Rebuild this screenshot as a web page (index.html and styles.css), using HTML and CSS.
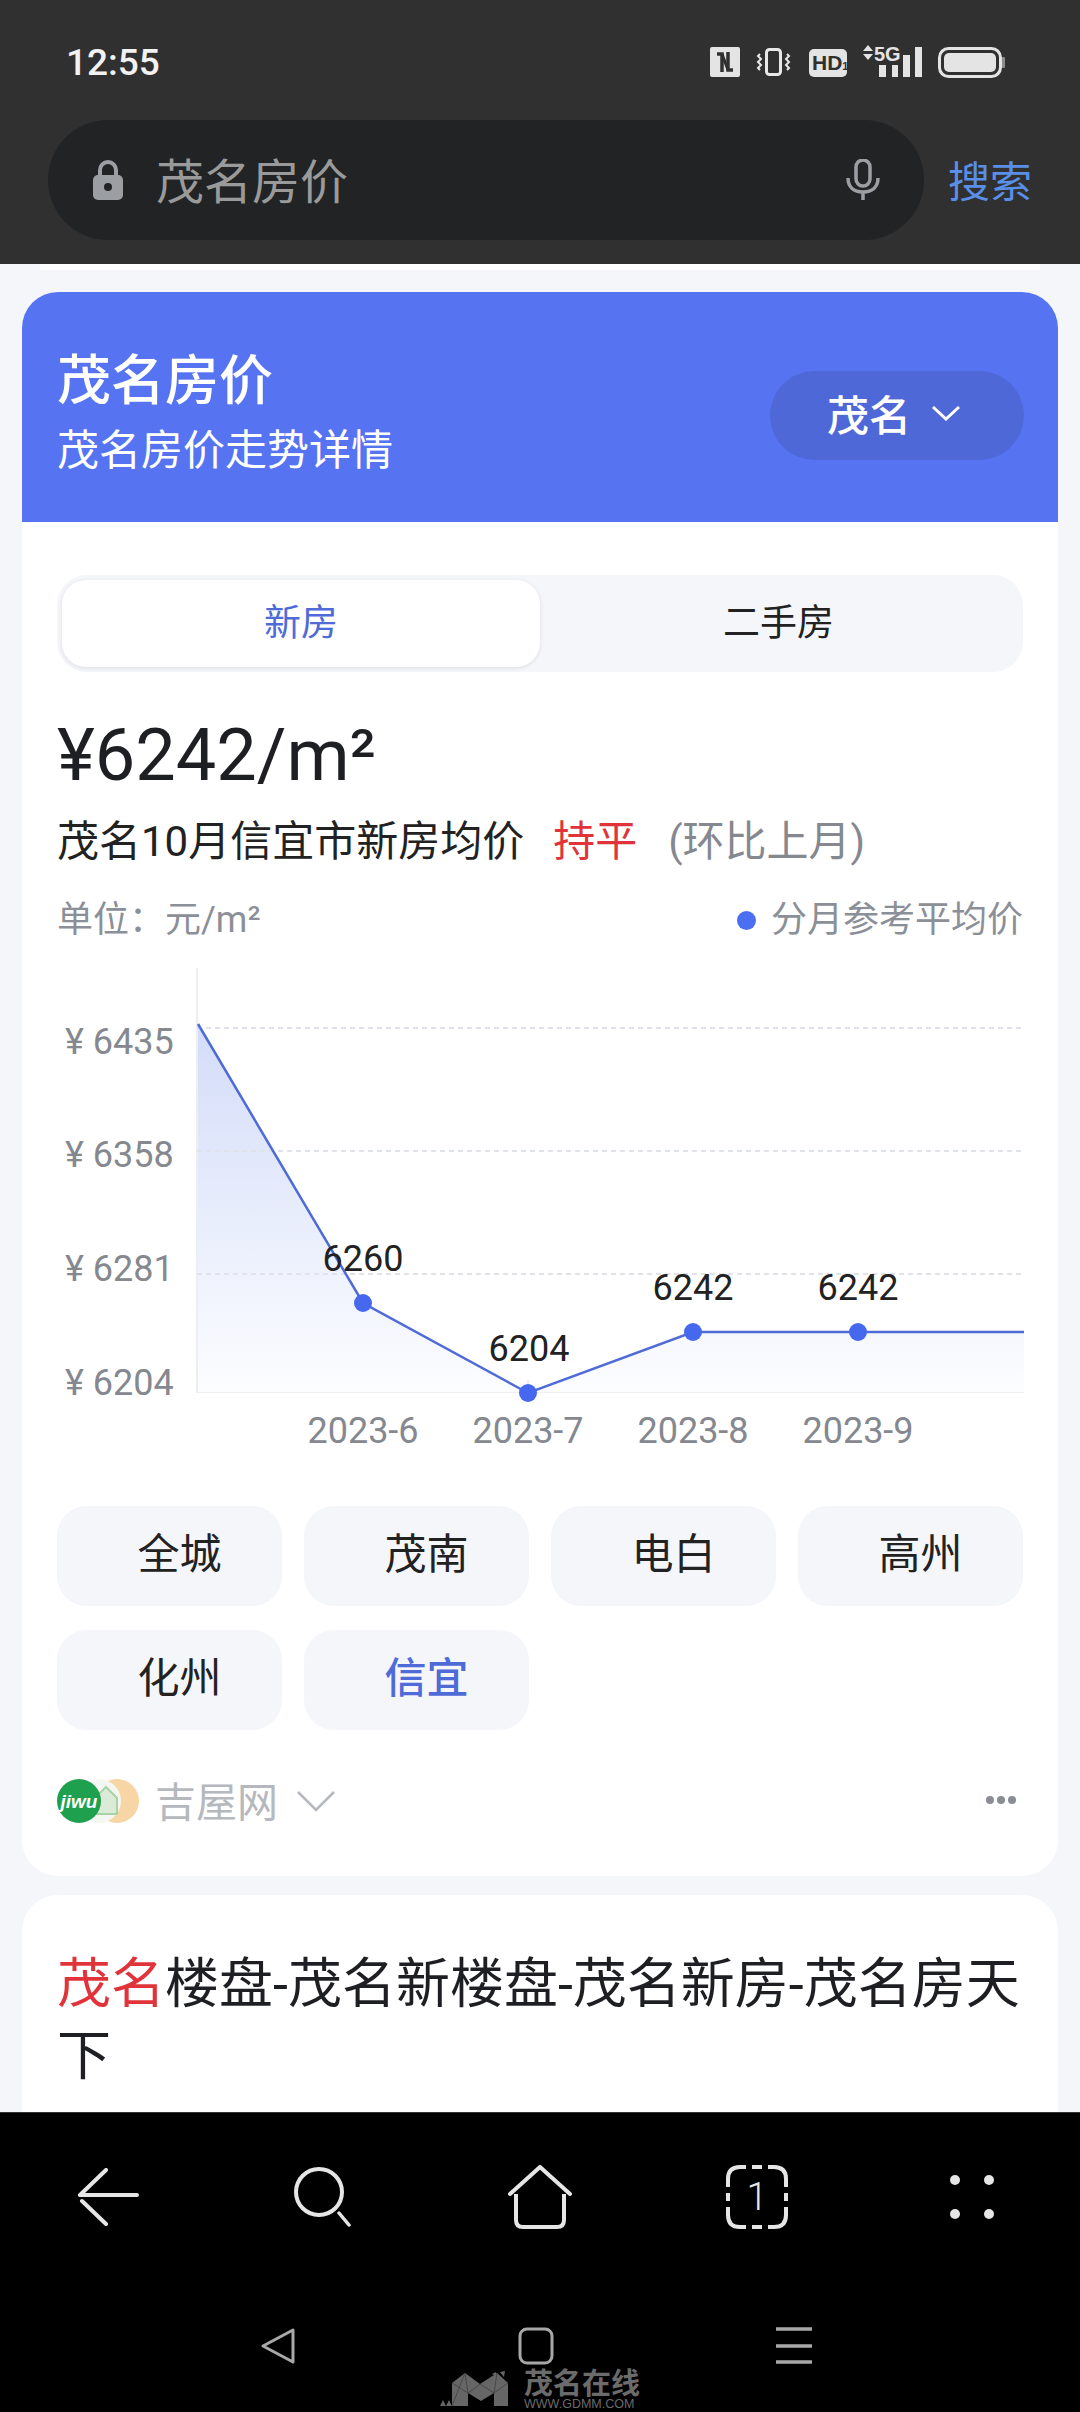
FILE: index.html
```html
<!DOCTYPE html>
<html lang="zh-CN">
  <head>
    <meta charset="UTF-8" />
    <meta name="viewport" content="width=device-width, initial-scale=1.0" />
    <title>茂名房价</title>
    <link rel="stylesheet" href="styles.css">
  </head>
  <body>
    <div class="phone">
      <header class="topbar">
        <div class="status">
          <span class="time">12:55</span>
          <svg class="status-icons" width="296" height="40" viewBox="0 -3 296 40">
            <!-- nfc -->
            <rect x="1" y="2" width="30" height="30" rx="2" fill="#e4e4e4"/>
            <path d="M8 9h5v18M24 25h-5V7" fill="none" stroke="#303030" stroke-width="3.500"/>
            <path d="M13 9l6 16" fill="none" stroke="#303030" stroke-width="3"/>
            <!-- vibrate -->
            <rect x="57.500" y="4.500" width="14" height="25" rx="3" fill="none" stroke="#e8e8e8" stroke-width="3"/>
            <path d="M51 9l-2 2 3 3-3 3 3 3-3 3 2 2M78 9l2 2-3 3 3 3-3 3 3 3-2 2" fill="none" stroke="#e8e8e8" stroke-width="2"/>
            <!-- hd -->
            <rect x="100" y="4" width="38" height="28" rx="5" fill="#e4e4e4"/>
            <text class="hd-text" x="103" y="25">HD<tspan class="hd-sub">1</tspan></text>
            <!-- 5g signal -->
            <path d="M159 0l5 6h-10zM159 15l5-6h-10z" fill="#e4e4e4"/>
            <text class="fiveg" x="165" y="16">5G</text>
            <rect x="170" y="20" width="7" height="12" fill="#e4e4e4"/>
            <rect x="183" y="20" width="6" height="12" fill="#e4e4e4"/>
            <rect x="194" y="10" width="7" height="22" fill="#e4e4e4"/>
            <rect x="206" y="2" width="7" height="30" fill="#e4e4e4"/>
            <!-- battery -->
            <rect x="230.500" y="3.500" width="61" height="28" rx="9" fill="none" stroke="#e4e4e4" stroke-width="3"/>
            <rect x="235" y="8" width="52" height="19" rx="5" fill="#e4e4e4"/>
            <rect x="293" y="12" width="3" height="11" rx="1" fill="#8c8c8c"/>
          </svg>
        </div>
        <div class="searchrow">
          <div class="searchbox">
            <svg width="32" height="40" viewBox="0 0 32 40">
              <path d="M8 17V10a8 8 0 0 1 16 0v7" fill="none" stroke="#9b9fa3" stroke-width="4"/>
              <rect x="1" y="15" width="30" height="25" rx="5" fill="#9b9fa3"/>
              <circle cx="16" cy="27" r="4" fill="#212325"/>
            </svg>
            <span class="searchtext">茂名房价</span>
            <svg class="mic" width="34" height="42" viewBox="0 0 34 42">
              <rect x="10" y="1" width="14" height="26" rx="7" fill="none" stroke="#9b9fa3" stroke-width="3.500"/>
              <path d="M2 19c0 9 6 14 15 14s15-5 15-14M17 33v8" fill="none" stroke="#9b9fa3" stroke-width="3.500"/>
            </svg>
          </div>
          <span class="searchbtn">搜索</span>
        </div>
      </header>

      <main class="page">
        <section class="card">
          <div class="hero">
            <div class="hero-text">
              <h1>茂名房价</h1>
              <p>茂名房价走势详情</p>
            </div>
            <div class="citypill">
              <span>茂名</span>
              <svg width="30" height="16" viewBox="0 0 30 16"><path d="M2 2l13 12L28 2" fill="none" stroke="#fff" stroke-width="3"/></svg>
            </div>
          </div>
          <div class="card-body">
            <div class="tabs">
              <div class="tab active">新房</div>
              <div class="tab">二手房</div>
            </div>
            <div class="price">¥6242/m²</div>
            <div class="summary">
              <span>茂名10月信宜市新房均价</span>
              <span class="flat">持平</span>
              <span class="compare">(环比上月)</span>
            </div>
            <div class="legend">
              <span>单位：元/m²</span>
              <span class="legend-key"><i class="dot"></i>分月参考平均价</span>
            </div>
            <svg class="chart" width="967" height="500" viewBox="57 960 967 500">
              <defs>
                <linearGradient id="area" x1="0" y1="0" x2="0" y2="1">
                  <stop offset="0" stop-color="#d3dcf9"/>
                  <stop offset="1" stop-color="#fcfdff"/>
                </linearGradient>
              </defs>
              <path class="axis" d="M197 968V1392H1024"/>
              <path class="grid" d="M197 1028H1024M197 1151H1024M197 1274H1024"/>
              <path class="axis" d="M363 1380v12M528 1380v12M693 1380v12M858 1380v12"/>
              <path d="M198 1024L363 1303L528 1393L693 1332H1024V1392H198Z" fill="url(#area)"/>
              <path class="grid" d="M197 1151H278M197 1274H355"/>
              <path class="line" d="M198 1024L363 1303L528 1393L693 1332H1024"/>
              <circle class="point" cx="363" cy="1303" r="9"/>
              <circle class="point" cx="528" cy="1393" r="9"/>
              <circle class="point" cx="693" cy="1332" r="9"/>
              <circle class="point" cx="858" cy="1332" r="9"/>
              <text class="ylabel" x="65" y="1054">¥ 6435</text>
              <text class="ylabel" x="65" y="1167">¥ 6358</text>
              <text class="ylabel" x="65" y="1281">¥ 6281</text>
              <text class="ylabel" x="65" y="1395">¥ 6204</text>
              <text class="value" x="363" y="1271">6260</text>
              <text class="value" x="529" y="1361">6204</text>
              <text class="value" x="693" y="1300">6242</text>
              <text class="value" x="858" y="1300">6242</text>
              <text class="xlabel" x="363" y="1443">2023-6</text>
              <text class="xlabel" x="528" y="1443">2023-7</text>
              <text class="xlabel" x="693" y="1443">2023-8</text>
              <text class="xlabel" x="858" y="1443">2023-9</text>
            </svg>
            <div class="areas">
              <div class="area">全城</div>
              <div class="area">茂南</div>
              <div class="area">电白</div>
              <div class="area">高州</div>
              <div class="area">化州</div>
              <div class="area current">信宜</div>
            </div>
            <div class="source">
              <div class="source-logos">
                <span class="logo-orange"></span>
                <span class="logo-white"></span>
                <svg class="logo-house" width="26" height="30" viewBox="0 0 26 30">
                  <path d="M2 13L13 2l11 11v16H2z" fill="#dcebd8" stroke="#a9d2a6" stroke-width="2"/>
                </svg>
                <span class="logo-jiwu">jiwu</span>
              </div>
              <span class="source-name">吉屋网</span>
              <svg width="38" height="22" viewBox="0 0 38 22"><path d="M1 2l18 18L37 2" fill="none" stroke="#b5b8bd" stroke-width="2.500"/></svg>
              <span class="more"><i></i><i></i><i></i></span>
            </div>
          </div>
        </section>

        <section class="card result">
          <h2><em>茂名</em>楼盘-茂名新楼盘-茂名新房-茂名房天下</h2>
        </section>
      </main>

      <footer class="bottom">
        <nav class="toolbar">
          <svg width="64" height="58" viewBox="0 0 64 58"><path d="M29 2L3 27M3 27h57M5 33l24 23" fill="none" stroke="#e6e6e6" stroke-width="4" stroke-linecap="round"/></svg>
          <svg width="60" height="60" viewBox="0 0 60 60"><circle cx="25" cy="25" r="23" fill="none" stroke="#e6e6e6" stroke-width="4"/><path d="M45 46l10 12" stroke="#e6e6e6" stroke-width="3.500" stroke-linecap="round"/></svg>
          <svg width="66" height="64" viewBox="0 0 66 64"><path d="M3 29L33 2l30 27" fill="none" stroke="#e6e6e6" stroke-width="4" stroke-linecap="round" stroke-linejoin="round"/><path d="M9 29v26q0 7 7 7h34q7 0 7-7V29" fill="none" stroke="#e6e6e6" stroke-width="4"/></svg>
          <div class="tabcount">
            <svg width="62" height="64" viewBox="0 0 62 64">
              <path d="M2 22V14Q2 2 14 2h6M26 2h10M42 2h6Q60 2 60 14v8M60 28v8M60 42v8Q60 62 48 62h-6M36 62H26M20 62h-6Q2 62 2 50v-8M2 36v-8" fill="none" stroke="#e6e6e6" stroke-width="4"/>
            </svg>
            <span>1</span>
          </div>
          <svg class="dots" width="44" height="44" viewBox="0 0 44 44"><circle cx="5" cy="5" r="5" fill="#e6e6e6"/><circle cx="39" cy="5" r="5" fill="#e6e6e6"/><circle cx="5" cy="39" r="5" fill="#e6e6e6"/><circle cx="39" cy="39" r="5" fill="#e6e6e6"/></svg>
        </nav>
        <nav class="sysnav">
          <svg width="36" height="38" viewBox="0 0 36 38"><path d="M33 3v32L3 19z" fill="none" stroke="#a8a8a8" stroke-width="3" stroke-linejoin="round"/></svg>
          <svg width="36" height="38" viewBox="0 0 36 38"><rect x="2" y="2" width="32" height="34" rx="7" fill="none" stroke="#a8a8a8" stroke-width="3"/></svg>
          <svg width="36" height="38" viewBox="0 0 36 38"><path d="M0 2h36M0 19h36M0 35h36" stroke="#a8a8a8" stroke-width="3.500"/></svg>
        </nav>
        <div class="watermark">
          <svg width="76" height="36" viewBox="0 0 76 36">
            <path d="M12 12L25 2L40 13L57 2L68 12V35H54V22L41 30L28 22V35H12Z" fill="#666"/>
            <path d="M12 12L28 22M25 2L28 22M25 2L12 35M40 13L28 22M40 13L54 22M57 2L54 22M68 12L54 22" fill="none" stroke="#484848" stroke-width="1"/>
            <path d="M60 1l5-1-1 6zM52 3l4-2 0 4zM0 35l3-6 3 6zM6 35l3-6 3 6z" fill="#666"/>
          </svg>
          <div class="watermark-text">
            <strong>茂名在线</strong>
            <small>WWW.GDMM.COM</small>
          </div>
        </div>
      </footer>
    </div>
  </body>
</html>
```

FILE: styles.css
```css
* {
  margin: 0;
  padding: 0;
  box-sizing: border-box;
}

body {
  background: #000;
  font-family: Roboto, "Noto Sans CJK SC", sans-serif;
}

.phone {
  width: 1080px;
  height: 2412px;
  display: flex;
  flex-direction: column;
  overflow: hidden;
  background: #303030;
}

/* top bar */
.topbar {
  height: 264px;
  flex: none;
  background: #303030;
  padding: 0 48px;
}

.status {
  height: 120px;
  padding: 4px 27px 0 18px;
  display: flex;
  align-items: center;
  justify-content: space-between;
}

.time {
  color: #f2f2f2;
  font-size: 37px;
  font-weight: 500;
}

.hd-text {
  font: 700 21px "Liberation Sans", sans-serif;
  fill: #303030;
}

.hd-sub {
  font-size: 11px;
}

.fiveg {
  font: 700 20px "Liberation Sans", sans-serif;
  fill: #e4e4e4;
}

.searchrow {
  display: flex;
  align-items: center;
  justify-content: space-between;
}

.searchbox {
  width: 876px;
  height: 120px;
  border-radius: 60px;
  background: #212325;
  padding: 0 44px 0 44px;
  display: flex;
  align-items: center;
}

.searchtext {
  margin-left: 32px;
  padding-bottom: 5px;
  color: #9a9a9a;
  font-size: 48px;
}

.mic {
  margin-left: auto;
}

.searchbtn {
  color: #5a8fe8;
  font-size: 42px;
  padding-bottom: 4px;
}

/* page */
.page {
  flex: 1;
  min-height: 0;
  overflow: hidden;
  background: linear-gradient(#fff, #fff) 40px 0 / 1000px 6px no-repeat, #f4f6fa;
  padding: 28px 22px 0;
}

.card {
  background: #fff;
  border-radius: 36px;
  overflow: hidden;
}

.hero {
  height: 230px;
  background: #5674f2;
  color: #fff;
  padding: 16px 34px 0 35px;
  display: flex;
  align-items: center;
  justify-content: space-between;
}

.hero h1 {
  margin: -3px 0 3px;
  font-size: 54px;
  font-weight: 500;
  line-height: 72px;
}

.hero p {
  font-size: 42px;
  line-height: 60px;
}

.citypill {
  width: 254px;
  height: 89px;
  border-radius: 45px;
  background: #4f68d8;
  font-size: 42px;
  font-weight: 500;
  padding: 0 6px 5px 0;
  display: flex;
  align-items: center;
  justify-content: center;
  gap: 20px;
}

.card-body {
  padding: 53px 35px 51px;
}

.tabs {
  height: 97px;
  background: #f4f6fa;
  border-radius: 30px;
  padding: 5px 0 5px 5px;
  display: flex;
  font-size: 37px;
  color: #222;
}

.tab {
  flex: 1;
  padding: 0 6px 7px 0;
  display: flex;
  align-items: center;
  justify-content: center;
  border-radius: 24px;
}

.tab.active {
  flex: none;
  width: 478px;
  padding-right: 0;
  background: #fff;
  color: #4f6bd8;
  box-shadow: 0 1px 4px rgba(0, 0, 0, 0.1);
}

.price {
  margin-top: 36px;
  font-size: 72px;
  line-height: 96px;
  color: #1e1f22;
}

.summary {
  margin-top: 8px;
  font-size: 42px;
  line-height: 60px;
  color: #222;
  display: flex;
}

.flat {
  margin-left: 29px;
  color: #e0343a;
}

.compare {
  margin-left: 31px;
  color: #85888f;
}

.legend {
  margin-top: 23px;
  font-size: 36px;
  line-height: 50px;
  color: #8b8f97;
  display: flex;
  justify-content: space-between;
}

.legend-key {
  display: flex;
  align-items: center;
}

.dot {
  width: 19px;
  height: 19px;
  border-radius: 50%;
  background: #4a6ff0;
  margin-right: 15px;
}

.chart {
  display: block;
  margin-top: 15px;
}

.axis {
  fill: none;
  stroke: #eceef2;
  stroke-width: 2;
}

.grid {
  fill: none;
  stroke: #dfe2e8;
  stroke-width: 2;
  stroke-dasharray: 5 4;
}

.line {
  fill: none;
  stroke: #4f6bd8;
  stroke-width: 2.500;
}

.point {
  fill: #4568ee;
}

.ylabel {
  font-size: 36px;
  fill: #85888f;
}

.value {
  font-size: 36px;
  fill: #222;
  text-anchor: middle;
}

.xlabel {
  font-size: 36px;
  fill: #85888f;
  text-anchor: middle;
}

.areas {
  margin-top: 46px;
  display: grid;
  grid-template-columns: repeat(4, 1fr);
  gap: 24px 22px;
}

.area {
  height: 100px;
  border-radius: 30px;
  background: #f4f6fa;
  color: #222;
  font-size: 42px;
  padding: 0 0 11px 20px;
  display: flex;
  align-items: center;
  justify-content: center;
}

.area.current {
  color: #4f6bd8;
  font-weight: 500;
}

.source {
  margin-top: 47px;
  height: 48px;
  display: flex;
  align-items: center;
}

.source-logos {
  position: relative;
  width: 82px;
  height: 44px;
}

.logo-orange {
  position: absolute;
  right: 0;
  top: 0;
  width: 44px;
  height: 44px;
  border-radius: 50%;
  background: #f7d5a4;
}

.logo-white {
  position: absolute;
  left: 20px;
  top: 0;
  width: 44px;
  height: 44px;
  border-radius: 50%;
  background: #f4f6f2;
}

.logo-house {
  position: absolute;
  left: 36px;
  top: 6px;
}

.logo-jiwu {
  position: absolute;
  left: 0;
  top: 0;
  width: 44px;
  height: 44px;
  border-radius: 50%;
  background: #1fa04e;
  color: #fff;
  font: italic 700 19px/46px "Liberation Sans", sans-serif;
  text-align: center;
}

.source-name {
  margin: 0 19px 0 16px;
  padding-bottom: 4px;
  color: #b5b8bd;
  font-size: 41px;
}

.more {
  margin: 0 7px 2px auto;
  display: flex;
  gap: 3px;
}

.more i {
  width: 8px;
  height: 8px;
  border-radius: 50%;
  background: #8a8d93;
}

.card.result {
  margin-top: 19px;
  padding: 54px 35px;
}

.result h2 {
  font-size: 54px;
  font-weight: 400;
  line-height: 72px;
  color: #1e1f22;
}

.result em {
  font-style: normal;
  color: #e0343a;
}

/* bottom bars */
.bottom {
  height: 300px;
  flex: none;
  position: relative;
  background: #000;
  border-top: 1px solid #333;
}

.toolbar {
  height: 168px;
  padding: 0 0 0 77px;
  display: flex;
  align-items: center;
  gap: 153px;
}

.dots {
  margin-left: 9px;
}

.tabcount {
  position: relative;
  width: 62px;
  height: 64px;
}

.tabcount span {
  position: absolute;
  inset: 0;
  color: #e6e6e6;
  font-size: 38px;
  font-weight: 300;
  line-height: 64px;
  text-align: center;
}

.sysnav {
  width: 552px;
  margin-left: 260px;
  display: flex;
  justify-content: space-between;
  margin-top: 46px;
}

/* sits over the nav bar, a photo watermark */
.watermark {
  position: absolute;
  left: 440px;
  top: 258px;
  display: flex;
  gap: 8px;
  color: #6b6b6b;
}

.watermark-text {
  display: flex;
  flex-direction: column;
  width: 116px;
}

.watermark strong {
  font-size: 29px;
  line-height: 26px;
}

.watermark small {
  font: 12.500px/14px "Liberation Sans", sans-serif;
}
```
